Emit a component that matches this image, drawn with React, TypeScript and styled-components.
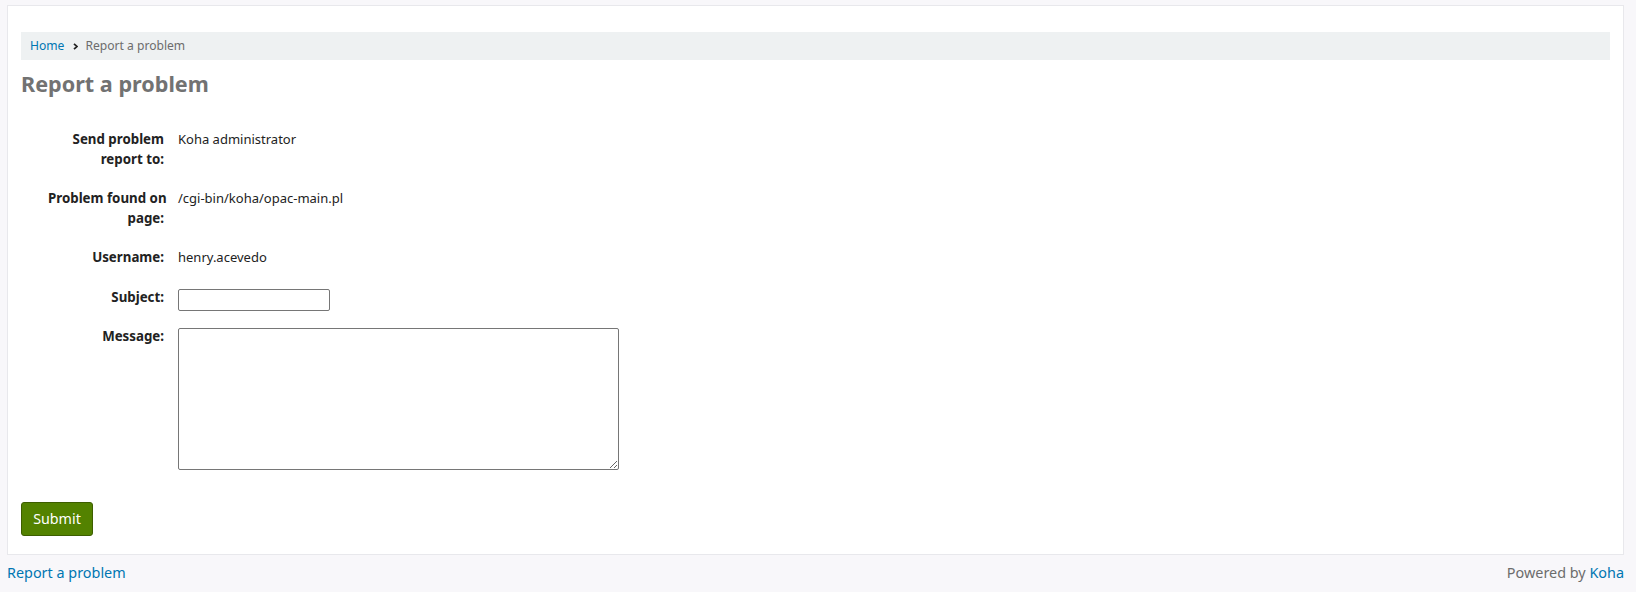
import styled, { createGlobalStyle } from 'styled-components';

const GlobalStyle = createGlobalStyle`
  html, body {
    margin: 0;
    padding: 0;
    background: #f8f7fa;
  }
  body {
    font-family: "Noto Sans", "Open Sans", sans-serif;
    font-size: 13px;
    color: #222;
  }
  * {
    box-sizing: border-box;
  }
`;

const Page = styled.div`
  padding: 5px 12px 0 7px;
  min-height: 592px;
`;

const Card = styled.main`
  background: #fff;
  border: 1px solid #e8e8ec;
  padding: 26px 13px 18px 13px;
`;

const Breadcrumb = styled.nav`
  display: flex;
  align-items: center;
  height: 28px;
  padding-left: 9px;
  background: #eef1f2;
  font-size: 12.1px;
  line-height: 28px;
  color: #6c6c6c;

  a {
    color: #0076b2;
    text-decoration: none;
  }
`;

const Chevron = styled.svg`
  width: 5px;
  height: 7px;
  margin: 0 7px 0 9px;
  position: relative;
  top: 0.5px;
`;

const Title = styled.h1`
  margin: 11px 0 34px;
  font-size: 21.6px;
  line-height: 25px;
  font-weight: 700;
  color: #727272;
`;

const Form = styled.form`
  display: flex;
  flex-direction: column;
  gap: 20px;
  padding-left: 27px;
`;

const Row = styled.div`
  display: flex;
  align-items: flex-start;
  line-height: 19.5px;
`;

const Label = styled.label`
  width: 116px;
  margin-right: 14px;
  flex-shrink: 0;
  text-align: right;
  font-size: 13.3px;
  font-weight: 700;
  white-space: nowrap;
  color: #222;
`;

const Value = styled.div`
  color: #222;
`;

const TextInput = styled.input`
  display: block;
  width: 152px;
  height: 22px;
  margin: 1.5px 0 -4px;
  padding: 1px 2px;
  border: 1px solid #767676;
  border-radius: 2px;
  font: inherit;
  background: #fff;
`;

const TextArea = styled.textarea`
  display: block;
  width: 441px;
  height: 142px;
  margin-top: 1px;
  padding: 2px;
  border: 1px solid #767676;
  border-radius: 2px;
  font: inherit;
  background: #fff;
`;

const Actions = styled.div`
  padding-top: 32px;
`;

const SubmitButton = styled.button`
  width: 72px;
  height: 34px;
  padding: 0;
  border: 1px solid #3d5e00;
  border-radius: 3px;
  background: #538200;
  color: #fff;
  font-family: "Noto Sans", "Open Sans", sans-serif;
  font-size: 14.3px;
  line-height: 32px;
  cursor: pointer;
`;

const Footer = styled.footer`
  display: flex;
  justify-content: space-between;
  padding-top: 7px;
  font-size: 14.4px;
  line-height: 21px;
  color: #6c6c6c;

  a {
    color: #0076b2;
    text-decoration: none;
  }
`;

const fields = [
  { label: ['Send problem', 'report to:'], value: 'Koha administrator' },
  { label: ['Problem found on', 'page:'], value: '/cgi-bin/koha/opac-main.pl' },
  { label: ['Username:'], value: 'henry.acevedo' },
];

export default function App() {
  return (
    <>
      <GlobalStyle />
      <Page>
        <Card>
          <Breadcrumb>
            <a href="#">Home</a>
            <Chevron viewBox="0 0 5 7">
              <path d="M1 0.8 L3.9 3.5 L1 6.2" fill="none" stroke="#222" strokeWidth="1.7" />
            </Chevron>
            <span>Report a problem</span>
          </Breadcrumb>

          <Title>Report a problem</Title>

          <Form onSubmit={(e) => e.preventDefault()}>
            {fields.map((f) => (
              <Row key={f.value}>
                <Label>
                  {f.label.map((line, i) => (
                    <span key={line}>
                      {i > 0 && <br />}
                      {line}
                    </span>
                  ))}
                </Label>
                <Value>{f.value}</Value>
              </Row>
            ))}
            <Row>
              <Label htmlFor="subject">Subject:</Label>
              <TextInput id="subject" type="text" />
            </Row>
            <Row>
              <Label htmlFor="message">Message:</Label>
              <TextArea id="message" />
            </Row>
          </Form>

          <Actions>
            <SubmitButton type="submit">Submit</SubmitButton>
          </Actions>
        </Card>

        <Footer>
          <a href="#">Report a problem</a>
          <span>
            Powered by <a href="#">Koha</a>
          </span>
        </Footer>
      </Page>
    </>
  );
}
